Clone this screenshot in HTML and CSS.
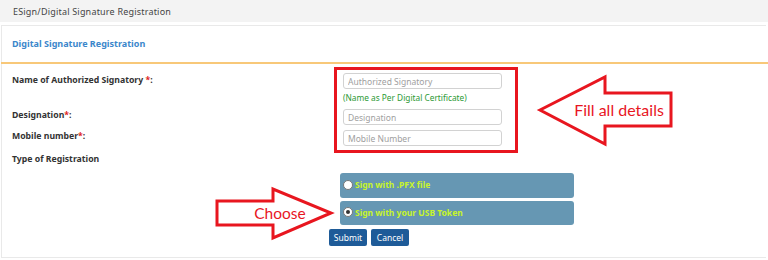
FILE: index.html
```html
<!DOCTYPE html>
<html lang="en">
<head>
  <meta charset="UTF-8">
  <title>ESign/Digital Signature Registration</title>
  <link rel="stylesheet" href="styles.css">
</head>
<body>
  <div class="page">
    <div class="breadcrumb">ESign/Digital Signature Registration</div>

    <div class="panel">
      <div class="panel-heading">Digital Signature Registration</div>

      <form class="form-grid">
        <label class="lbl lbl-name">Name of Authorized Signatory <span class="req">*</span>:</label>
        <label class="lbl lbl-desig">Designation<span class="req">*</span>:</label>
        <label class="lbl lbl-mobile">Mobile number<span class="req">*</span>:</label>

        <div class="highlight-box">
          <input type="text" class="field" placeholder="Authorized Signatory">
          <div class="hint">(Name as Per Digital Certificate)</div>
          <input type="text" class="field field-desig" placeholder="Designation">
          <input type="text" class="field field-mobile" placeholder="Mobile Number">
        </div>

        <label class="lbl lbl-type">Type of Registration</label>

        <div class="reg-options">
          <label class="reg-option">
            <span class="radio"></span>
            Sign with .PFX file
          </label>
          <label class="reg-option reg-option-2">
            <span class="radio checked"></span>
            Sign with your USB Token
          </label>
          <div class="actions">
            <button type="button" class="btn">Submit</button>
            <button type="button" class="btn">Cancel</button>
          </div>
        </div>
      </form>
    </div>

    <!-- annotation arrows drawn over the screenshot -->
    <svg class="annotations" width="768" height="260" viewBox="0 0 768 260">
      <polygon points="540,110 605,77 605,93 671,93 671,126 605,126 605,144"
               fill="#fff" stroke="#e8161f" stroke-width="3" stroke-linejoin="miter"/>
      <text x="619" y="115.5" class="annot-text" text-anchor="middle">Fill all details</text>
      <polygon points="217,201 273,201 273,189 331,213 273,238 273,225 217,225"
               fill="#fff" stroke="#e8161f" stroke-width="3" stroke-linejoin="miter"/>
      <text x="280" y="219" class="annot-text annot-choose" text-anchor="middle">Choose</text>
    </svg>
  </div>
</body>
</html>
```

FILE: styles.css
```css
* {
  margin: 0;
  padding: 0;
  box-sizing: border-box;
}

body {
  background-color: #fff;
  font-family: 'Noto Sans', 'Open Sans', sans-serif;
  color: #333;
}

.page {
  position: relative;
  width: 768px;
  height: 260px;
  overflow: hidden;
}

.breadcrumb {
  height: 22px;
  line-height: 24px;
  padding-left: 13px;
  font-size: 9px;
  letter-spacing: 0.2px;
  color: #444;
  background-color: #f3f3f3;
}

.panel {
  margin: 3px 2px 0 1px;
  height: 233px;
  border: 1px solid #e9e9e9;
  border-right: none;
}

.panel-heading {
  height: 38px;
  line-height: 36px;
  font-size: 9px;
  font-weight: 700;
  color: #3b87cb;
  border-bottom: 2px solid #f8c879;
  margin-right: -2px;
  margin-left: -1px;
  padding-left: 11px;
}

.form-grid {
  display: grid;
  grid-template-columns: 322px 1fr;
  grid-template-rows: 40px 21px 25px auto auto;
  padding: 3px 0 0 10px;
}

.lbl {
  grid-column: 1;
  font-size: 8.7px;
  font-weight: 700;
  line-height: 14px;
  color: #333;
}

.req {
  color: #e02020;
}

.lbl-name {
  grid-row: 1;
  padding-top: 6px;
}

.lbl-desig {
  grid-row: 2;
  padding-top: 1px;
}

.lbl-mobile {
  grid-row: 3;
  padding-top: 1px;
}

.lbl-type {
  grid-row: 4;
  margin-top: -1px;
}

.highlight-box {
  grid-column: 2;
  grid-row: 1 / 4;
  width: 184px;
  height: 86px;
  border: 3px solid #e8161f;
  padding: 3px 0 0 6px;
  display: flex;
  flex-direction: column;
}

.field {
  width: 159px;
  height: 16px;
  border: 1px solid #d2d2d2;
  border-radius: 3px;
  padding: 0 4px;
  font-family: 'Noto Sans', sans-serif;
  font-size: 8.5px;
  color: #555;
  outline: none;
}

.field::placeholder {
  color: #a0a0a0;
}

.hint {
  margin-top: 2px;
  font-size: 8.3px;
  line-height: 14px;
  color: #2c9a35;
}

.field-desig {
  margin-top: 4px;
}

.field-mobile {
  margin-top: 5px;
}

.reg-options {
  grid-column: 2;
  grid-row: 5;
  margin-top: 7px;
  display: flex;
  flex-direction: column;
}

.reg-option {
  display: flex;
  align-items: center;
  gap: 2px;
  width: 234px;
  height: 25px;
  margin-left: 6px;
  padding-left: 3px;
  padding-bottom: 2px;
  background-color: #6697b3;
  border-radius: 3px;
  font-size: 8.5px;
  font-weight: 700;
  color: #c8f52a;
}

.reg-option-2 {
  height: 24px;
  margin-top: 3px;
}

.radio {
  width: 10px;
  height: 10px;
  border-radius: 50%;
  background-color: #fff;
  border: 1px solid #777;
  position: relative;
}

.radio.checked::after {
  content: '';
  position: absolute;
  left: 2px;
  top: 2px;
  width: 4px;
  height: 4px;
  border-radius: 50%;
  background-color: #333;
}

.actions {
  display: flex;
  gap: 4px;
  margin-top: 4px;
  margin-left: -5px;
}

.btn {
  width: 38px;
  height: 17px;
  border: none;
  border-radius: 2px;
  background-color: #1e5b98;
  color: #fff;
  font-family: 'Noto Sans', sans-serif;
  font-size: 8.5px;
}

.annotations {
  position: absolute;
  top: 0;
  left: 0;
  pointer-events: none;
}

.annot-text {
  font-family: Lato, 'Noto Sans', sans-serif;
  font-size: 16px;
  fill: #e8161f;
}

.annot-choose {
  font-size: 15.5px;
}
```
